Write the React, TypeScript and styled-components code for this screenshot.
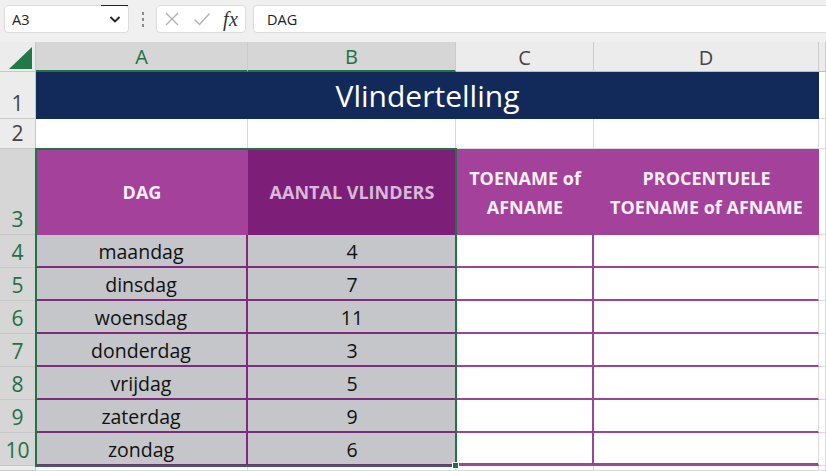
import React from 'react';
import styled, { createGlobalStyle } from 'styled-components';

const Global = createGlobalStyle`
  html, body { margin: 0; padding: 0; overflow: hidden; background: #fff; }
  body { font-family: "Open Sans", "Noto Sans", sans-serif; }
  * { box-sizing: border-box; }
`;

const Page = styled.div`
  width: 826px;
  height: 471px;
  display: flex;
  flex-direction: column;
  overflow: hidden;
`;

const TopBar = styled.div`
  height: 42px;
  flex: none;
  background: #f0f0f0;
  display: flex;
  align-items: flex-start;
  padding: 5px 0 0 4px;
`;

const Box = styled.div<{ $w?: number }>`
  height: 28px;
  background: #fff;
  border: 1px solid #dcdcdc;
  border-radius: 4px;
  display: flex;
  align-items: center;
  ${(p) => (p.$w ? `width: ${p.$w}px; flex: none;` : 'flex: 1; margin-right: -8px;')}
`;

const BoxText = styled.span<{ $pl?: number }>`
  font-size: 14.5px;
  color: #222;
  padding-left: ${(p) => p.$pl ?? 7}px;
  flex: 1;
`;

const DropBtn = styled.div`
  width: 27px;
  height: 27px;
  margin-top: -1px;
  border-top: 1px solid #222;
  display: flex;
  align-items: center;
  justify-content: center;
`;

const Grip = styled.div`
  width: 27px;
  height: 28px;
  flex: none;
  display: flex;
  flex-direction: column;
  align-items: center;
  justify-content: center;
  gap: 3px;
`;

const GripDot = styled.span`
  width: 2px;
  height: 3px;
  background: #8a8a8a;
`;

const FxArea = styled.div`
  display: flex;
  align-items: center;
  width: 100%;
  padding-left: 7px;
`;

const FxLabel = styled.span`
  font-family: "Liberation Serif", "DejaVu Serif", serif;
  font-style: italic;
  font-size: 20px;
  color: #333;
  margin-left: 12px;
  letter-spacing: 0.5px;
`;

const Spacer = styled.div<{ $w: number }>`
  width: ${(p) => p.$w}px;
  flex: none;
`;

const Sheet = styled.div`
  flex: 1;
  display: grid;
  grid-template-columns: 36px 212px 208px 138px 225px 1fr;
  grid-template-rows: 30px 47px 30px 86px repeat(7, 33px) 1fr;
  position: relative;
`;

const Corner = styled.div`
  background: #ececec;
  border-right: 1px solid #c8c8c8;
  border-bottom: 1px solid #c8c8c8;
  display: flex;
  align-items: flex-end;
  justify-content: flex-end;
  padding: 0 3px 2px 0;
`;

const ColHead = styled.div<{ $sel?: boolean }>`
  background: ${(p) => (p.$sel ? '#d6d6d6' : '#ececec')};
  color: ${(p) => (p.$sel ? '#1f7044' : '#444')};
  border-right: 1px solid #cbcbcb;
  border-bottom: ${(p) => (p.$sel ? '2px solid #217346' : '1px solid #bdbdbd')};
  display: flex;
  align-items: center;
  justify-content: center;
  font-size: 20px;
  padding-top: 1px;
`;

const RowHead = styled.div<{ $sel?: boolean }>`
  background: ${(p) => (p.$sel ? '#d6d6d6' : '#ececec')};
  color: ${(p) => (p.$sel ? '#1f7044' : '#444')};
  border-right: 1px solid #c8c8c8;
  border-bottom: 1px solid #c8c8c8;
  display: flex;
  align-items: flex-end;
  justify-content: center;
  font-size: 21px;
  line-height: 26px;
  padding-bottom: 2px;
  overflow: hidden;
`;

const Title = styled.div`
  grid-column: span 4;
  background: #122a5a;
  color: #fff;
  font-size: 30px;
  display: flex;
  align-items: center;
  justify-content: center;
  padding-bottom: 1px;
`;

const Blank = styled.div`
  background: #fff;
  border-right: 1px solid #dadada;
  border-bottom: 1px solid #dadada;
`;

const HeadCell = styled.div<{ $bg: string; $fg: string; $active?: boolean }>`
  background: ${(p) => p.$bg};
  color: ${(p) => p.$fg};
  font-weight: 700;
  font-size: 18px;
  line-height: 29px;
  text-align: center;
  display: flex;
  align-items: center;
  justify-content: center;
  padding-top: 1px;
  ${(p) => (p.$active ? 'box-shadow: inset 1px 1px 0 #fff;' : '')}
`;

const DataCell = styled.div<{ $br?: string }>`
  background: #c4c6c9;
  color: #111;
  font-size: 19.5px;
  display: flex;
  align-items: center;
  justify-content: center;
  border-bottom: 2px solid #7f2a7d;
  border-right: ${(p) => p.$br ?? 'none'};
  padding-top: 2px;
`;

const EmptyCell = styled.div<{ $br: string; $bb: number }>`
  background: #fff;
  border-bottom: ${(p) => p.$bb}px solid #9c4597;
  border-right: ${(p) => p.$br};
`;

const Selection = styled.div`
  position: absolute;
  grid-column: 2 / 4;
  grid-row: 4 / 12;
  top: -1px;
  left: -1px;
  right: -1px;
  bottom: -1px;
  border: 2px solid #217346;
  z-index: 2;
  pointer-events: none;
`;

const FillHandle = styled.span`
  position: absolute;
  right: -4px;
  bottom: -4px;
  width: 7px;
  height: 7px;
  background: #217346;
  border: 1px solid #fff;
`;

const days: [string, number][] = [
  ['maandag', 4],
  ['dinsdag', 7],
  ['woensdag', 11],
  ['donderdag', 3],
  ['vrijdag', 5],
  ['zaterdag', 9],
  ['zondag', 6],
];

export default function App() {
  return (
    <Page>
      <Global />
      <TopBar>
        <Box $w={125}>
          <BoxText>A3</BoxText>
          <DropBtn>
            <svg width="14" height="10" viewBox="0 0 14 10">
              <path d="M2.5 3 L7 7.5 L11.5 3" fill="none" stroke="#222" strokeWidth="1.8" />
            </svg>
          </DropBtn>
        </Box>
        <Grip>
          <GripDot />
          <GripDot />
          <GripDot />
        </Grip>
        <Box $w={90}>
          <FxArea>
            <svg width="16" height="16" viewBox="0 0 16 16">
              <path d="M2 2 L14 14 M14 2 L2 14" stroke="#b2b2b2" strokeWidth="1.4" fill="none" />
            </svg>
            <Spacer $w={13} />
            <svg width="18" height="16" viewBox="0 0 18 16">
              <path d="M1.5 8.5 L6.5 13.5 L16.5 2.5" stroke="#b2b2b2" strokeWidth="1.4" fill="none" />
            </svg>
            <FxLabel>fx</FxLabel>
          </FxArea>
        </Box>
        <Spacer $w={7} />
        <Box>
          <BoxText $pl={13}>DAG</BoxText>
        </Box>
      </TopBar>
      <Sheet>
        <Corner>
          <svg width="23" height="22" viewBox="0 0 23 22">
            <path d="M0 22 L23 22 L23 0 Z" fill="#1f7a45" />
          </svg>
        </Corner>
        <ColHead $sel>A</ColHead>
        <ColHead $sel>B</ColHead>
        <ColHead>C</ColHead>
        <ColHead>D</ColHead>
        <ColHead />

        <RowHead>1</RowHead>
        <Title>Vlindertelling</Title>
        <Blank />

        <RowHead>2</RowHead>
        <Blank />
        <Blank />
        <Blank />
        <Blank />
        <Blank />

        <RowHead $sel>3</RowHead>
        <HeadCell $bg="#a3419b" $fg="#f6eef5" $active>DAG</HeadCell>
        <HeadCell $bg="#7d1f78" $fg="#d8b9d6">AANTAL VLINDERS</HeadCell>
        <HeadCell $bg="#a3419b" $fg="#f6eef5">
          TOENAME of
          <br />
          AFNAME
        </HeadCell>
        <HeadCell $bg="#a3419b" $fg="#f6eef5">
          PROCENTUELE
          <br />
          TOENAME of AFNAME
        </HeadCell>
        <Blank />

        {days.map(([d, n], i) => {
          const last = i === days.length - 1;
          return (
            <React.Fragment key={d}>
              <RowHead $sel>{i + 4}</RowHead>
              <DataCell $br="2px solid #7f2a7d">{d}</DataCell>
              <DataCell>{n}</DataCell>
              <EmptyCell $br="2px solid #9c4597" $bb={last ? 3 : 2} />
              <EmptyCell $br="1px solid #dadada" $bb={last ? 3 : 2} />
              <Blank />
            </React.Fragment>
          );
        })}

        <RowHead />
        <Blank />
        <Blank />
        <Blank />
        <Blank />
        <Blank />

        <Selection>
          <FillHandle />
        </Selection>
      </Sheet>
    </Page>
  );
}
